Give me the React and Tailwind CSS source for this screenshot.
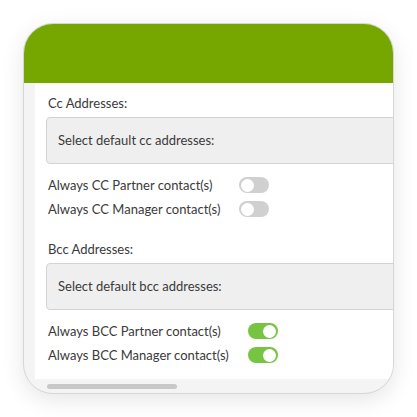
import React from "react";

function Toggle({ on }) {
  return (
    <div
      className={
        "w-[30px] h-[16px] rounded-full flex items-center px-[1.5px] " +
        (on ? "bg-[#76c442] justify-end" : "bg-[#d0d0d0] justify-start")
      }
    >
      <div className="w-[13px] h-[13px] rounded-full bg-white" />
    </div>
  );
}

function Group({ label, placeholder, rows, className }) {
  return (
    <div className={className}>
      <div className="pl-[2px] h-[16px] leading-[16px]">{label}</div>
      <div className="mt-[6px] h-[47px] w-[420px] rounded-[4px] border border-[#d3d3d3] bg-[#efefef] flex items-center pl-[11px]">
        {placeholder}
      </div>
      <div className="mt-[9px] pl-[2px] grid grid-cols-[auto_auto] justify-start gap-x-[19px]">
        {rows.map((r) => (
          <React.Fragment key={r.text}>
            <div className="h-[24px] leading-[24px]">{r.text}</div>
            <div className="h-[24px] flex items-center">
              <Toggle on={r.on} />
            </div>
          </React.Fragment>
        ))}
      </div>
    </div>
  );
}

export default function App() {
  return (
    <div className="w-[417px] h-[417px] bg-white pt-[23px] pl-[23px] font-['Lato',sans-serif] text-[13px] text-[#3a3a3a]">
      <div className="w-[371px] h-[371px] rounded-[30px] border border-[#d6d6d6] overflow-hidden flex flex-col bg-[#f4f4f4] shadow-[0_6px_22px_rgba(0,0,0,0.1)]">
        <div className="h-[59px] bg-[#76a600] shrink-0" />
        <div className="flex h-[296px] shrink-0">
          <div className="w-[11px] shrink-0" />
          <div className="flex-1 bg-white overflow-hidden pt-[12px] pl-[11px]">
            <Group
              label="Cc Addresses:"
              placeholder="Select default cc addresses:"
              rows={[
                { text: "Always CC Partner contact(s)", on: false },
                { text: "Always CC Manager contact(s)", on: false },
              ]}
            />
            <Group
              className="mt-[20px]"
              label="Bcc Addresses:"
              placeholder="Select default bcc addresses:"
              rows={[
                { text: "Always BCC Partner contact(s)", on: true },
                { text: "Always BCC Manager contact(s)", on: true },
              ]}
            />
          </div>
        </div>
        <div className="flex-1 pt-[5px] pl-[23px]">
          <div className="w-[130px] h-[5px] rounded-full bg-[#c8c8c8]" />
        </div>
      </div>
    </div>
  );
}
